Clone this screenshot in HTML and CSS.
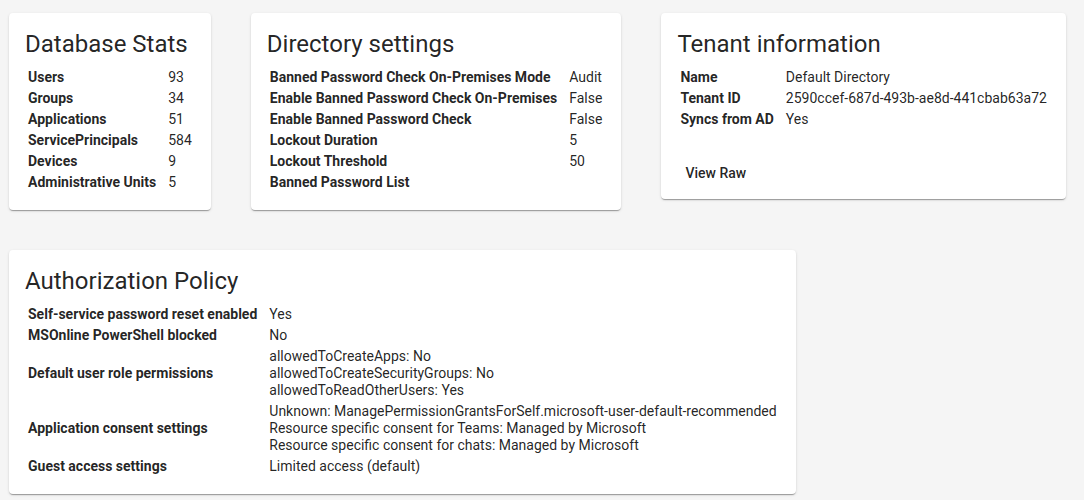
FILE: index.html
```html
<!DOCTYPE html>
<html lang="en">
<head>
<meta charset="utf-8">
<title>Overview</title>
<link rel="stylesheet" href="styles.css">
</head>
<body>
<main class="grid">
  <section class="card">
    <div class="card-content">
      <h2 class="card-title">Database Stats</h2>
      <table class="kv">
        <tr><th>Users</th><td>93</td></tr>
        <tr><th>Groups</th><td>34</td></tr>
        <tr><th>Applications</th><td>51</td></tr>
        <tr><th>ServicePrincipals</th><td>584</td></tr>
        <tr><th>Devices</th><td>9</td></tr>
        <tr><th>Administrative Units</th><td>5</td></tr>
      </table>
    </div>
  </section>

  <section class="card">
    <div class="card-content">
      <h2 class="card-title">Directory settings</h2>
      <table class="kv">
        <tr><th>Banned Password Check On-Premises Mode</th><td>Audit</td></tr>
        <tr><th>Enable Banned Password Check On-Premises</th><td>False</td></tr>
        <tr><th>Enable Banned Password Check</th><td>False</td></tr>
        <tr><th>Lockout Duration</th><td>5</td></tr>
        <tr><th>Lockout Threshold</th><td>50</td></tr>
        <tr><th>Banned Password List</th><td></td></tr>
      </table>
    </div>
  </section>

  <section class="card">
    <div class="card-content">
      <h2 class="card-title">Tenant information</h2>
      <table class="kv">
        <tr><th>Name</th><td>Default Directory</td></tr>
        <tr><th>Tenant ID</th><td>2590ccef-687d-493b-ae8d-441cbab63a72</td></tr>
        <tr><th>Syncs from AD</th><td>Yes</td></tr>
      </table>
    </div>
    <div class="card-actions">
      <button class="text-btn" type="button">View Raw</button>
    </div>
  </section>

  <section class="card">
    <div class="card-content">
      <h2 class="card-title">Authorization Policy</h2>
      <table class="kv">
        <tr><th>Self-service password reset enabled</th><td>Yes</td></tr>
        <tr><th>MSOnline PowerShell blocked</th><td>No</td></tr>
        <tr><th>Default user role permissions</th><td>
          <div>allowedToCreateApps: No</div>
          <div>allowedToCreateSecurityGroups: No</div>
          <div>allowedToReadOtherUsers: Yes</div>
        </td></tr>
        <tr><th>Application consent settings</th><td>
          <div>Unknown: ManagePermissionGrantsForSelf.microsoft-user-default-recommended</div>
          <div>Resource specific consent for Teams: Managed by Microsoft</div>
          <div>Resource specific consent for chats: Managed by Microsoft</div>
        </td></tr>
        <tr><th>Guest access settings</th><td>Limited access (default)</td></tr>
      </table>
    </div>
  </section>
</main>
</body>
</html>
```

FILE: styles.css
```css
html, body {
  margin: 0;
  padding: 0;
  background: #f5f5f5;
}

body {
  font-family: Roboto, "Liberation Sans", Arial, sans-serif;
  color: rgba(0, 0, 0, 0.87);
  font-size: 14px;
}

.grid {
  display: flex;
  flex-wrap: wrap;
  align-items: flex-start;
  gap: 40px;
  padding: 13px 9px;
}

.card {
  background: #fff;
  border-radius: 4px;
  box-shadow: 0 2px 1px -1px rgba(0, 0, 0, 0.2),
              0 1px 1px 0 rgba(0, 0, 0, 0.14),
              0 1px 3px 0 rgba(0, 0, 0, 0.12);
}

.card-content {
  padding: 16px;
}

.card-title {
  margin: 0 0 7px;
  font-size: 24px;
  font-weight: 400;
  line-height: 30px;
}

.kv {
  border-collapse: separate;
  border-spacing: 2px;
}

.kv th,
.kv td {
  padding: 1px;
  line-height: 17px;
  font-size: 14px;
  white-space: nowrap;
  vertical-align: middle;
}

.kv th {
  text-align: left;
  font-weight: 700;
  padding-right: 9px;
}

.kv td {
  font-weight: 400;
}

.card-actions {
  padding: 8px 16px 8px 16px;
}

.text-btn {
  font-family: inherit;
  font-size: 14px;
  font-weight: 500;
  line-height: 24px;
  color: rgba(0, 0, 0, 0.87);
  background: transparent;
  border: 0;
  border-radius: 4px;
  padding: 6px 8px;
  min-width: 64px;
  cursor: pointer;
}
```
